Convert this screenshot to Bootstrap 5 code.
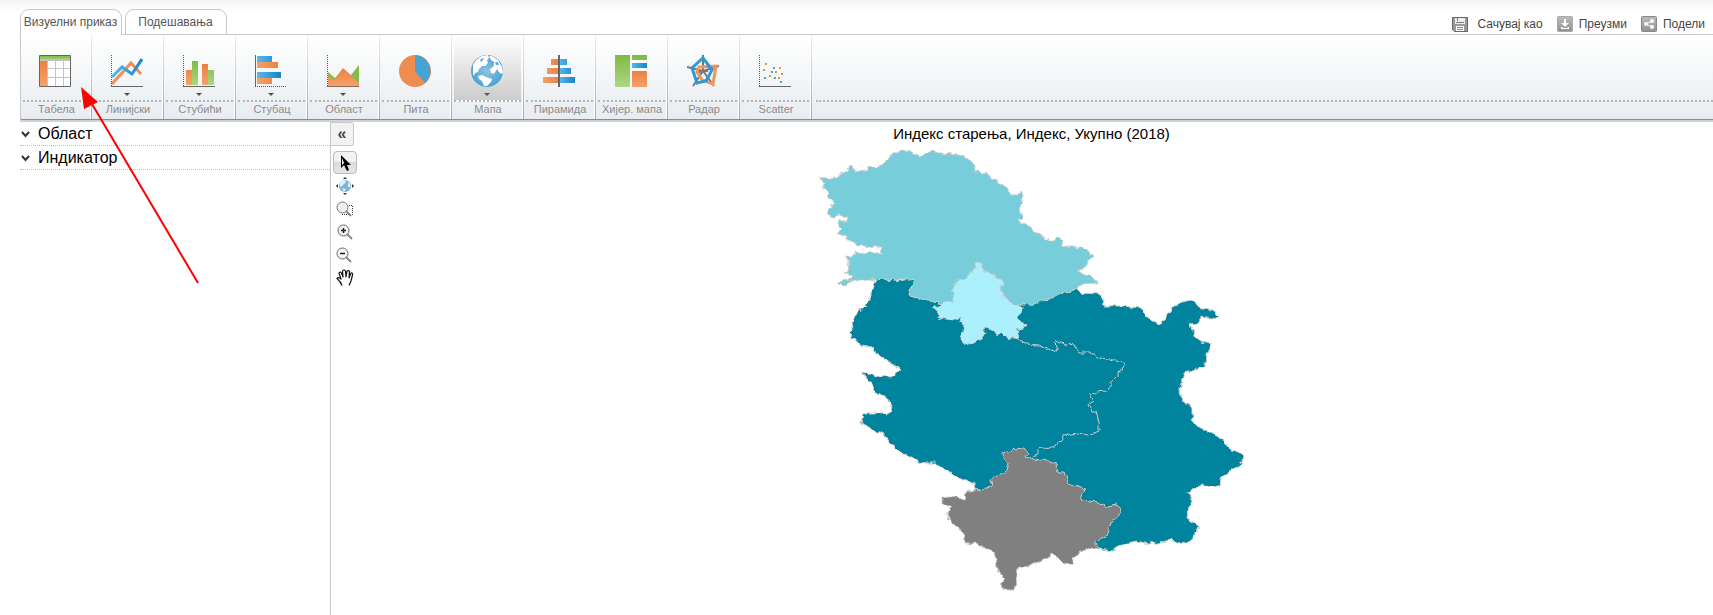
<!DOCTYPE html>
<html lang="sr">
<head>
<meta charset="utf-8">
<meta name="viewport" content="width=device-width, initial-scale=1">
<title>Индекс старења</title>
<link href="https://cdn.jsdelivr.net/npm/bootstrap@5.3.0/dist/css/bootstrap.min.css" rel="stylesheet">
<style>
body{font-family:"Liberation Sans",Arial,sans-serif;font-size:12px;line-height:16px;color:#000;background:linear-gradient(#f4f4f4,#fff 12px) no-repeat #fff}
button{font-family:inherit}
.topbar{padding:9px 8px 0 20px;height:35px}
.tabs{gap:3px}
.actions{gap:14px;padding-top:4px}
.tab{position:relative;width:102px;height:26px;padding:0 2px 1px 1px;font-size:12px;color:#555;background:#fff;border:1px solid #c8c8c8;border-radius:9px 9px 0 0;white-space:nowrap}
.tab.on{border-bottom-color:#fff;z-index:2}
.act{color:#444;text-decoration:none;gap:6px}
.act.wide{gap:9px}
.ribbon{position:relative;margin-left:20px;margin-top:-1px;height:88px;border-top:1px solid #c8c8c8;border-left:1px solid #c8c8c8;border-bottom:2px solid #cfd3d8;background:linear-gradient(#fff,#e8ecf0)}
.ribbon::after{content:"";position:absolute;left:0;right:0;bottom:0;height:1px;background:#878b93}
.chart{display:flex;flex-direction:column;width:72px;padding:0 2px;border:0;background:none;color:#8c8c8c;font-size:11px;border-right:1px solid;border-image:linear-gradient(#eee,#a6a8ac) 1;box-shadow:inset -1px 0 #fff}
.chart:first-child{width:71px}
.pic{width:100%;height:67px;padding-top:20px;border-bottom:2px dotted #b4b7ba}
.chart svg{display:block;margin:0 auto}
.chart .pic{padding-right:2px}
.chart.on .pic{background:linear-gradient(#fff,#ccc)}
.caret{width:6px;height:3px;margin:6px auto 0;border:3px solid transparent;border-top-color:#555;border-bottom:0}
.lbl{width:100%;line-height:14px;padding-left:1px;white-space:nowrap}
.side{width:311px;margin-left:20px;border-right:1px solid #c8c8c8}
.sec{height:24px;padding:1px 0 0 1px;border:0;border-bottom:1px dotted #bbb;background:none;font-size:16px;line-height:22px;gap:8px}
.tools{width:19px}
.tool{width:24px;height:23px;margin-left:2px;padding:0;border:0;background:none;flex:none}
.tool svg,.act svg,.sec svg{display:block;margin:auto}
.fold{width:23px;height:24px;margin:0 0 5px;padding:0;border:1px solid #ccc;border-left:0;border-radius:0 3px 3px 0;background:#f2f2f2;color:#444;font-size:16px;font-weight:700;line-height:20px;flex:none}
.tool.on{border:1px solid #bbb;border-radius:4px;background:linear-gradient(#f2f2f2 50%,#dcdcdc 50%,#e6e6e6)}
.maptitle{font-size:15px;line-height:24px;font-weight:400;margin:0}
.map{display:block;max-width:100%;margin:0 auto}
.pointer{position:absolute;left:78px;top:84px;pointer-events:none;z-index:3}
</style>
<script src="https://cdn.jsdelivr.net/npm/bootstrap@5.3.0/dist/js/bootstrap.bundle.min.js"></script>
</head>
<body class="min-vh-100 d-flex flex-column overflow-hidden position-relative">
<svg width="0" height="0" class="position-absolute" aria-hidden="true"><defs>
<linearGradient id="o" x2="0" y2="1"><stop stop-color="#ec8040"/><stop offset="1" stop-color="#f6a16c"/></linearGradient>
<linearGradient id="oh"><stop stop-color="#f6a16c"/><stop offset="1" stop-color="#ec8040"/></linearGradient>
<linearGradient id="g" x2="0" y2="1"><stop stop-color="#7cbb46"/><stop offset="1" stop-color="#afd683"/></linearGradient>
<linearGradient id="b"><stop stop-color="#56b8ee"/><stop offset="1" stop-color="#1685c4"/></linearGradient>
<radialGradient id="sea"><stop stop-color="#8fc3e4"/><stop offset="1" stop-color="#4ba3d4"/></radialGradient>
<linearGradient id="gr" x2="0" y2="1"><stop stop-color="#bbb"/><stop offset="1" stop-color="#929292"/></linearGradient>
<symbol id="globe" viewBox="0 0 32 32"><circle cx="16" cy="16" r="16" fill="url(#sea)"/><path fill="#fff" d="M2 10Q5 4 11 1l6-1 1 3-2 2 1 3-3 3-3 0-3 3-1 3-3 1-1 3-1-2ZM7 21l4-1 4 2 6 2-1 3-4 4-3 0-2-5-3-2ZM18 1l3 0 6 4 4 7 1 6-2 1-3-3-1-2-3 5-3-1-1-4 3-2 1-2 0-3-3-2Z"/><path fill="#62aedb" d="m9 5 3-2 1 1-3 3ZM24 7l3 0 1 3-3 0Z"/></symbol>
</defs></svg>

<header class="topbar d-flex justify-content-between">
  <nav class="tabs d-flex"><button class="tab on">Визуелни приказ</button><button class="tab">Подешавања</button></nav>
  <div class="actions d-flex align-items-center text-nowrap">
    <a href="#" class="act wide d-flex align-items-center"><svg width="16" height="15"><path d="M.5.5h15v14h-13l-2-2Z" fill="#999" stroke="#666"/><path fill="#eee" d="M3 1h10v6H3Z"/><path fill="#777" d="M5 1h1v3H5ZM4 5h8v1H4Z"/><path fill="#fff" d="M4 9h8v5H4Z"/><path fill="#888" d="M5 10h6v1H5ZM5 12h6v1H5Z"/></svg>Сачувај као</a>
    <a href="#" class="act d-flex align-items-center"><svg width="16" height="16"><rect x=".5" y=".5" width="15" height="15" rx="1" fill="url(#gr)" stroke="#aaa"/><path fill="#fff" d="M7 3h2v4h3l-4 4-4-4h3ZM4 11h1l1 1h4l1-1h1v2H4Z"/></svg>Преузми</a>
    <a href="#" class="act d-flex align-items-center"><svg width="16" height="16"><rect x=".5" y=".5" width="15" height="15" rx="1" fill="url(#gr)" stroke="#8a8a8a"/><path d="m11 5-6 3 6 3" fill="none" stroke="#fff"/><g fill="#fff"><circle cx="11" cy="5" r="2"/><circle cx="5" cy="8" r="2"/><circle cx="11" cy="11" r="2"/></g></svg>Подели</a>
  </div>
</header>

<div class="ribbon d-flex">
  <button class="chart"><div class="pic"><svg width="32" height="32"><path fill="#fff" d="M0 0h32v32H0Z"/><path fill="url(#g)" d="M1 1h30v4H1Z"/><path fill="url(#o)" d="M1 6h7v25H1Z"/><path d="M8.500 6v25M16.500 6v25M24.500 6v25M8 13.500h23M8 22.500h23M1 5.500h30" stroke="#c4c4c4" fill="none"/><path d="M.5.5h31v31H.5Z" fill="none" stroke="#666"/></svg></div><div class="lbl">Табела</div></button>
  <button class="chart"><div class="pic"><svg width="32" height="32"><path d="m1 29 19-21 10 11" stroke="#f09055" stroke-width="3" fill="none"/><path d="m1 22 10-10 10 7L31 4" stroke="url(#b)" stroke-width="3" fill="none"/><path d="M.5 0v31" stroke="#555" stroke-dasharray="1 1"/><path d="M0 31.500h32" stroke="#666"/></svg><div class="caret"></div></div><div class="lbl">Линијски</div></button>
  <button class="chart"><div class="pic"><svg width="32" height="32"><path fill="url(#o)" d="M3 15h6v15H3ZM19 9h6v21h-6Z"/><path fill="url(#g)" d="M9 6h6v24H9ZM25 15h6v15h-6Z"/><path d="M.5 0v31" stroke="#555" stroke-dasharray="1 1"/><path d="M0 31.500h32" stroke="#666"/></svg><div class="caret"></div></div><div class="lbl">Стубићи</div></button>
  <button class="chart"><div class="pic"><svg width="32" height="32"><path fill="url(#b)" d="M2 1h15v6H2ZM2 17h24v6H2Z"/><path fill="url(#oh)" d="M2 7h21v6H2ZM2 23h15v6H2Z"/><path d="M.5 0v32" stroke="#666"/><path d="M0 31.500h32" stroke="#555" stroke-dasharray="1 1"/></svg><div class="caret"></div></div><div class="lbl">Стубац</div></button>
  <button class="chart"><div class="pic"><svg width="32" height="32"><path fill="#80bd4b" d="m1 17 7 6 8-9 8 6 8-10v21H1Z"/><path fill="url(#o)" d="m1 21 6 4 9-12 16 15v3H1Z"/><path d="M.5 0v31" stroke="#555" stroke-dasharray="1 1"/><path d="M0 31.500h32" stroke="#886b58"/></svg><div class="caret"></div></div><div class="lbl">Област</div></button>
  <button class="chart"><div class="pic"><svg width="32" height="32"><circle cx="16" cy="16" r="16" fill="#ef8c50"/><path d="M16 16V0a16 16 0 0 1 10 28Z" fill="#45a3d6"/></svg></div><div class="lbl">Пита</div></button>
  <button class="chart on"><div class="pic"><svg width="32" height="32"><use href="#globe"/></svg><div class="caret"></div></div><div class="lbl">Мапа</div></button>
  <button class="chart"><div class="pic"><svg width="32" height="32"><path fill="url(#oh)" d="M8 4h8v6H8ZM4 13h12v6H4ZM0 22h16v6H0Z"/><path fill="url(#b)" d="M16 4h8v6h-8ZM16 13h12v6H16ZM16 22h16v6H16Z"/><path fill="#666" d="M15 0h2v32h-2Z"/></svg></div><div class="lbl">Пирамида</div></button>
  <button class="chart"><div class="pic"><svg width="32" height="32"><path fill="url(#g)" d="M0 0h15v32H0ZM17 0h15v5H17Z"/><path fill="url(#b)" d="M17 8h15v5H17Z"/><path fill="url(#o)" d="M17 16h15v16H17Z"/></svg></div><div class="lbl">Хијер. мапа</div></button>
  <button class="chart"><div class="pic"><svg width="32" height="32" fill="none"><path d="M16 0v16L0 12M16 16l16-5M16 16 6 31M16 16l11 15M11 17l10-1" stroke="#777" stroke-width="2"/><path d="m12 12 17-1-3 18-11-4-5-8Z" stroke="#f1955c" stroke-width="3"/><path d="m16 3 9 12-6 11-9 2-5-15Z" stroke="#2b9bd8" stroke-width="3"/></svg></div><div class="lbl">Радар</div></button>
  <button class="chart"><div class="pic"><svg width="32" height="32"><path d="M.5 0v31" stroke="#555" stroke-dasharray="1 1"/><path d="M0 31.500h32" stroke="#666"/><path fill="#ef8c50" d="M6 8h2v2H6ZM20 12h2v2h-2ZM16 16h2v2h-2ZM10 20h2v2h-2ZM19 22h2v2h-2Z"/><path fill="#45a3d6" d="M14 12h2v2h-2ZM12 16h2v2h-2ZM5 22h2v2H5ZM15 22h2v2h-2ZM21 26h2v2h-2Z"/><path fill="#80bd4b" d="M4 14h2v2H4ZM22 18h2v2h-2Z"/></svg></div><div class="lbl">Scatter</div></button>
  <div class="flex-grow-1 ps-1"><div class="pic"></div></div>
</div>

<main class="d-flex flex-grow-1">
  <aside class="side d-flex flex-column">
    <button class="sec d-flex align-items-center"><svg class="m-0" width="9" height="7"><path d="m1 1 3.500 4L8 1" fill="none" stroke="#333" stroke-width="2"/></svg>Област</button>
    <button class="sec d-flex align-items-center"><svg class="m-0" width="9" height="7"><path d="m1 1 3.500 4L8 1" fill="none" stroke="#333" stroke-width="2"/></svg>Индикатор</button>
  </aside>
  <div class="tools d-flex flex-column">
    <button class="fold">«</button>
    <button class="tool on" aria-label="Избор"><svg width="12" height="18"><path d="M2 1v13l3-3 3 6 2-1-2-5h4Z" fill="#000"/><path d="M3 4v7l2-2Z" fill="#fff"/></svg></button>
    <button class="tool" aria-label="Цела мапа"><svg width="18" height="18"><circle cx="9" cy="9" r="6" fill="#7ab3d8"/><path fill="#e4f0f8" d="M4 6q2-3 5-3l1 2-3 3-2 2-1-1ZM6 11l4 1-2 3ZM12 5l2 2v3l-2 0Z"/><path d="m9 0 2 2H7ZM9 18l2-2H7ZM0 9l2-2v4ZM18 9l-2-2v4Z" fill="#333"/></svg></button>
    <button class="tool" aria-label="Зумирај област"><svg width="18" height="16" fill="none"><path d="M9 4.500h7.500v9H6" stroke="#333" stroke-dasharray="1 1"/><circle cx="6.500" cy="6.500" r="5.500" fill="#eee" stroke="#777"/><path d="m10 10 5 5" stroke="#888" stroke-width="2"/></svg></button>
    <button class="tool" aria-label="Увећај"><svg width="16" height="16" fill="none"><circle cx="6.500" cy="6.500" r="5.500" fill="#f4f4f4" stroke="#666"/><path d="m10 10 5 5" stroke="#888" stroke-width="2"/><path d="M4 6.500h5M6.500 4v5" stroke="#222" stroke-width="1.500"/></svg></button>
    <button class="tool" aria-label="Умањи"><svg width="18" height="16" fill="none"><circle cx="6.500" cy="6.500" r="5.500" fill="#f4f4f4" stroke="#666"/><path d="m10 10 5 5" stroke="#888" stroke-width="2"/><path d="M4 6.500h5" stroke="#222" stroke-width="1.500"/></svg></button>
    <button class="tool" aria-label="Помери"><svg width="18" height="18" fill="#fff" stroke="#111" stroke-width="1.200" stroke-linejoin="round"><path d="M6 16.500Q5 13 1 9.500q1-2 4 .5L3 4q1-2 2.500 0L7 8 6.500 2Q8 0 9.500 2L10 8l1-6q2-1 2.500.5L13 9l2-5q2-.500 1.500 2L15 12l-2 4.500"/></svg></button>
  </div>
  <section class="flex-grow-1 text-center">
    <h1 class="maptitle">Индекс старења, Индекс, Укупно (2018)</h1>
    <svg class="map" width="441" height="455" viewBox="812 146 441 455" role="img" aria-label="Мапа Србије">
      <defs><filter id="coast" filterUnits="userSpaceOnUse" x="811" y="145" width="441" height="455" color-interpolation-filters="sRGB"><feTurbulence type="fractalNoise" baseFrequency=".16" numOctaves="2" seed="4"/><feDisplacementMap in="SourceGraphic" scale="6" xChannelSelector="R" yChannelSelector="G"/></filter></defs>
      <g filter="url(#coast)" stroke="#ccc" stroke-linejoin="round">
      <path fill="#78cdda" d="M819 178 822 179 840 177 841 174 847 173 851 166 854 171 867 170 872 167 882 165 891 157 891 155 898 152 910 151 922 156 934 152 943 152 945 155 951 152 953 155 958 154 967 158 974 164 977 171 988 173 992 179 998 181 1007 187 1012 195 1019 195 1021 191 1023 192 1022 205 1019 210 1024 217 1019 221 1027 224 1037 233 1046 238 1055 240 1059 238 1065 246 1087 249 1095 256 1089 261 1088 266 1079 270 1083 274 1093 277 1098 281 1097 284 1080 285 1078 289 1073 292 1065 293 1053 299 1042 300 1032 305 1020 305 1012 310 960 312 940 303 925 300 912 296 909 292 916 281 910 279 873 280 855 280 845 285 839 283 839 281 850 280 854 275 845 273 849 272 850 262 848 257 858 254 857 251 865 253 870 251 873 253 883 253 882 248 865 247 851 241 848 237 837 233 842 228 839 225 839 221 849 221 848 218 841 216 835 217 828 214 830 208 836 203 830 198 829 192 824 189 825 183Z"/>
      <path fill="#00849d" d="M1020 305 1032 305 1042 300 1053 299 1065 293 1073 292 1078 289 1082 293 1100 294 1104 298 1105 306 1125 306 1142 308 1147 315 1153 322 1162 324 1167 317 1176 305 1187 301 1192 301 1202 309 1213 310 1220 317 1213 319 1202 317 1199 323 1191 324 1191 327 1194 330 1195 337 1202 342 1213 344 1207 355 1206 366 1197 369 1186 372 1183 380 1180 392 1185 403 1193 408 1193 418 1198 427 1210 432 1223 439 1233 451 1245 455 1243 462 1223 477 1220 486 1203 485 1188 492 1193 500 1188 518 1200 526 1197 535 1189 542 1178 543 1173 538 1167 542 1150 544 1138 541 1136 543 1128 543 1113 551 1101 549 1060 520 1020 456 1000 340Z"/>
      <path fill="#00849d" d="M873 280 876 282 878 279 885 278 889 281 892 279 900 281 910 279 916 281 909 292 912 296 925 300 940 303 960 310 1020 339 1027 344 1040 345 1052 350 1058 351 1058 345 1055 342 1060 341 1067 346 1073 343 1080 352 1090 352 1100 358 1110 359 1125 363 1125 366 1118 376 1111 383 1111 388 1107 391 1098 392 1091 395 1095 401 1089 405 1093 412 1097 412 1100 422 1100 431 1090 435 1078 433 1065 436 1055 448 1042 447 1038 450 1038 454 1034 459 1020 480 977 491 976 483 955 476 937 463 927 463 920 462 908 455 894 449 892 443 884 434 862 424 864 413 877 413 890 415 893 406 890 400 878 392 863 372 878 376 893 377 902 369 888 360 877 353 873 346 860 345 850 334 854 330 853 320 860 313 871 300 871 291 875 287 876 282Z"/>
      <path fill="#acf0fd" d="M979 262 983 264 983 268 992 274 1003 280 1003 285 1000 287 1004 292 1004 297 1012 302 1023 307 1022 313 1017 317 1027 325 1025 328 1018 329 1020 339 1008 337 1003 332 997 335 995 331 987 328 984 330 986 333 982 339 971 345 964 342 961 338 964 330 965 324 961 317 956 320 940 318 939 310 933 307 940 306 943 303 954 300 955 293 951 292 954 290 957 281 969 277 971 273 977 269 976 263Z"/>
      <path fill="#808080" d="M1034 459 1027 456 1029 453 1025 448 1015 449 1012 452 1002 454 1010 463 1007 472 992 479 993 486 977 491 968 492 965 499 950 497 943 498 943 503 952 507 949 513 950 520 963 532 966 543 977 543 995 553 998 567 1004 580 1000 583 1003 589 1013 589 1018 585 1017 578 1018 569 1032 564 1043 561 1055 554 1065 564 1073 564 1075 557 1082 551 1093 547 1101 549 1096 542 1107 537 1112 523 1117 519 1122 509 1118 505 1108 507 1100 502 1082 500 1086 488 1070 484 1066 473 1058 473 1057 463 1050 461Z"/>
      </g>
    </svg>
  </section>
</main>
<svg class="pointer" width="124" height="204"><path d="M120 199 14 20" stroke="red" stroke-width="2"/><path d="m3 3 3 22 14-7Z" fill="red"/></svg>
</body>
</html>
